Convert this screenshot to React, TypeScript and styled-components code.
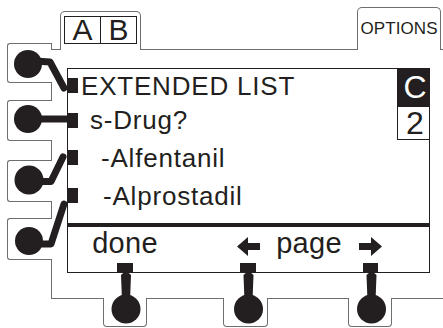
import React from 'react';
import styled, { createGlobalStyle } from 'styled-components';

const INK = '#231f20';
const CASE = '#6d6e71';

const GlobalStyle = createGlobalStyle`
  html, body { margin: 0; padding: 0; background: #fff; }
  body { font-family: "Liberation Sans", Arial, Helvetica, sans-serif; color: ${INK}; }
  * { box-sizing: border-box; }
`;

const Device = styled.div`
  width: 443px;
  height: 328px;
  overflow: hidden;
  display: grid;
  grid-template-columns: 7px 45px 1fr;
  grid-template-rows: 43px 7px 248px 30px;
`;

/* ---------- top edge with tabs ---------- */
const TopBar = styled.div`
  grid-column: 3;
  grid-row: 1 / 3;
  display: flex;
  align-items: flex-end;
`;

const CaseEdge = styled.div<{ $w?: number; $corner?: boolean }>`
  flex: ${(p) => (p.$w ? `0 0 ${p.$w}px` : '1 1 auto')};
  height: 7px;
  border-bottom: 1px solid ${CASE};
  ${(p) => (p.$corner ? `border-left: 1px solid ${CASE}; margin-left: -1px;` : '')}
`;

const Tab = styled.div<{ $w: number; $h: number; $pt: number }>`
  flex: 0 0 ${(p) => p.$w}px;
  height: ${(p) => p.$h}px;
  border: 1px solid ${CASE};
  border-bottom: none;
  border-radius: 5px 5px 0 0;
  padding-top: ${(p) => p.$pt}px;
  display: flex;
  flex-direction: column;
  align-items: center;
`;

const PairBox = styled.div`
  width: 73px;
  height: 28px;
  border: 1px solid ${INK};
  display: grid;
  grid-template-columns: 36px 1fr;
`;

const PairCell = styled.div<{ $divider?: boolean }>`
  font-size: 30px;
  line-height: 26px;
  text-align: center;
  ${(p) => (p.$divider ? `border-right: 1px solid ${INK};` : '')}
`;

const OptionsLabel = styled.div`
  font-size: 17px;
  line-height: 17px;
  letter-spacing: 0.1px;
`;

/* ---------- left side keys ---------- */
const LeftCol = styled.div`
  grid-column: 2;
  grid-row: 2 / 4;
  display: flex;
  flex-direction: column;
`;

const SideKey = styled.div<{ $h: number }>`
  position: relative;
  flex: 0 0 ${(p) => p.$h}px;
  border: 1px solid ${CASE};
  border-right: none;
  border-radius: 3px 0 0 3px;
`;

const Wall = styled.div<{ $h?: number }>`
  flex: ${(p) => (p.$h ? `0 0 ${p.$h}px` : '1 1 auto')};
  border-right: 1px solid ${CASE};
`;

const LeftKnobArt = styled.svg`
  position: absolute;
  left: -1px;
  top: -26px;
  width: 70px;
  height: 100px;
  overflow: visible;
`;

/* ---------- screen ---------- */
const Body = styled.div`
  grid-column: 3;
  grid-row: 3;
  padding: 18px 13px 25px 15px;
  display: flex;
`;

const Screen = styled.div`
  flex: 1;
  display: flex;
  flex-direction: column;
  border: 1px solid ${INK};
`;

const Upper = styled.div`
  flex: 1;
  display: flex;
`;

const List = styled.div`
  flex: 1;
  display: flex;
  flex-direction: column;
`;

const Row = styled.div<{ $h: number }>`
  height: ${(p) => p.$h}px;
  display: flex;
  align-items: center;
`;

const Marker = styled.div`
  width: 11px;
  height: 15px;
  margin-left: -1px;
  background: ${INK};
`;

const RowLabel = styled.div<{ $indent: number }>`
  margin-left: ${(p) => p.$indent}px;
  font-size: 26px;
  line-height: 26px;
  letter-spacing: 0.8px;
  white-space: nowrap;
`;

const Side = styled.div`
  width: 33px;
  margin: -1px -1px 0 0;
  display: flex;
  flex-direction: column;
`;

const ModeBox = styled.div<{ $inverse?: boolean; $h: number }>`
  height: ${(p) => p.$h}px;
  font-size: 32px;
  line-height: ${(p) => p.$h - (p.$inverse ? 0 : 1)}px;
  text-align: center;
  padding-left: 3px;
  background: ${(p) => (p.$inverse ? INK : '#fff')};
  color: ${(p) => (p.$inverse ? '#fff' : INK)};
  ${(p) => (p.$inverse ? '' : `border: 1px solid ${INK}; border-top: none;`)}
`;

const Divider = styled.div`
  height: 4px;
  background: ${INK};
`;

const SoftRow = styled.div`
  height: 45px;
  display: grid;
  grid-template-columns: 17px 80px 63px 40px 82px 40px 1fr;
`;

const SoftKey = styled.div<{ $col: number }>`
  grid-column: ${(p) => p.$col};
  display: flex;
  flex-direction: column;
  align-items: center;
  justify-content: space-between;
  margin-bottom: -1px;
`;

const SoftLabel = styled.div<{ $col?: number }>`
  ${(p) => (p.$col ? `grid-column: ${p.$col}; justify-self: center;` : '')}
  margin-top: 2px;
  font-size: 29px;
  line-height: 28px;
  letter-spacing: 0.3px;
  white-space: nowrap;
`;

const SoftMarker = styled.div<{ $w: number }>`
  width: ${(p) => p.$w}px;
  height: 10px;
  background: ${INK};
`;

const ArrowArt = styled.svg`
  width: 23px;
  height: 19px;
  margin-top: 10px;
  display: block;
`;

/* ---------- bottom edge with keys ---------- */
const BottomBar = styled.div`
  grid-column: 2 / 4;
  grid-row: 4;
  display: flex;
  align-items: flex-start;
`;

const BottomEdge = styled.div<{ $w?: number; $ml?: number }>`
  flex: ${(p) => (p.$w ? `0 0 ${p.$w}px` : '1 1 auto')};
  margin-left: ${(p) => p.$ml ?? 0}px;
  height: 1px;
  border-top: 1px solid ${CASE};
`;

const BottomKey = styled.div<{ $w: number }>`
  position: relative;
  flex: 0 0 ${(p) => p.$w}px;
  height: 29px;
  border: 1px solid ${CASE};
  border-top: none;
  border-radius: 0 0 4px 4px;
`;

const BottomKnobArt = styled.svg`
  position: absolute;
  left: -1px;
  top: -35px;
  width: 46px;
  height: 64px;
  overflow: visible;
`;

const LEFT_KEYS = [
  { h: 40, cx: 21, cy: 46, r: 14, d: 'M28 43 L43 44 L57 70', wall: 17 },
  { h: 41, cx: 21, cy: 44, r: 14, d: 'M21 44 L64.5 44', wall: 19 },
  { h: 42, cx: 22, cy: 45, r: 14.5, d: 'M28 46.5 L44 46.5 L56 22', wall: 16 },
  { h: 42, cx: 22, cy: 48, r: 14, d: 'M28 51 L44 51 L57 11', wall: 0 },
];

const ROWS = [
  { h: 33, indent: 3, text: 'EXTENDED LIST' },
  { h: 36, indent: 12, text: 's-Drug?' },
  { h: 39, indent: 23, text: '-Alfentanil' },
  { h: 37, indent: 25, text: '-Alprostadil' },
];

const Knob = ({ cx }: { cx: number }) => (
  <BottomKnobArt viewBox="0 0 46 64">
    <path
      d={`M${cx - 5} 12 Q${cx} 6 ${cx + 5} 12 L${cx + 4} 38 L${cx - 4} 38 Z`}
      fill={INK}
    />
    <circle cx={cx} cy={46} r={14.5} fill={INK} />
  </BottomKnobArt>
);

const Arrow = ({ right }: { right?: boolean }) => (
  <ArrowArt viewBox="0 0 23 19">
    <polygon
      points={
        right
          ? '23,9.5 12,0 12,6 0,6 0,13 12,13 12,19'
          : '0,9.5 11,0 11,6 23,6 23,13 11,13 11,19'
      }
      fill={INK}
    />
  </ArrowArt>
);

export default function App() {
  return (
    <>
      <GlobalStyle />
      <Device>
        <TopBar>
          <CaseEdge $w={9} $corner />
          <Tab $w={81} $h={39} $pt={4}>
            <PairBox>
              <PairCell $divider>A</PairCell>
              <PairCell>B</PairCell>
            </PairBox>
          </Tab>
          <CaseEdge />
          <Tab $w={84} $h={43} $pt={12}>
            <OptionsLabel>OPTIONS</OptionsLabel>
          </Tab>
          <CaseEdge $w={2} />
        </TopBar>

        <LeftCol>
          {LEFT_KEYS.map((k, i) => (
            <React.Fragment key={i}>
              <SideKey $h={k.h}>
                <LeftKnobArt viewBox="0 0 70 100">
                  <path d={k.d} fill="none" stroke={INK} strokeWidth={7} strokeLinecap="round" strokeLinejoin="round" />
                  <circle cx={k.cx} cy={k.cy} r={k.r} fill={INK} />
                </LeftKnobArt>
              </SideKey>
              <Wall $h={k.wall || undefined} />
            </React.Fragment>
          ))}
        </LeftCol>

        <Body>
          <Screen>
            <Upper>
              <List>
                {ROWS.map((r) => (
                  <Row key={r.text} $h={r.h}>
                    <Marker />
                    <RowLabel $indent={r.indent}>{r.text}</RowLabel>
                  </Row>
                ))}
              </List>
              <Side>
                <ModeBox $inverse $h={39}>C</ModeBox>
                <ModeBox $h={33}>2</ModeBox>
              </Side>
            </Upper>
            <Divider />
            <SoftRow>
              <SoftKey $col={2}>
                <SoftLabel>done</SoftLabel>
                <SoftMarker $w={16} />
              </SoftKey>
              <SoftKey $col={4}>
                <Arrow />
                <SoftMarker $w={16} />
              </SoftKey>
              <SoftLabel $col={5}>page</SoftLabel>
              <SoftKey $col={6}>
                <Arrow right />
                <SoftMarker $w={15} />
              </SoftKey>
            </SoftRow>
          </Screen>
        </Body>

        <BottomBar>
          <BottomEdge $ml={44} $w={52} />
          <BottomKey $w={44}>
            <Knob cx={23} />
          </BottomKey>
          <BottomEdge $w={76} />
          <BottomKey $w={45}>
            <Knob cx={25.5} />
          </BottomKey>
          <BottomEdge $w={80} />
          <BottomKey $w={44}>
            <Knob cx={23.5} />
          </BottomKey>
          <BottomEdge />
        </BottomBar>
      </Device>
    </>
  );
}
